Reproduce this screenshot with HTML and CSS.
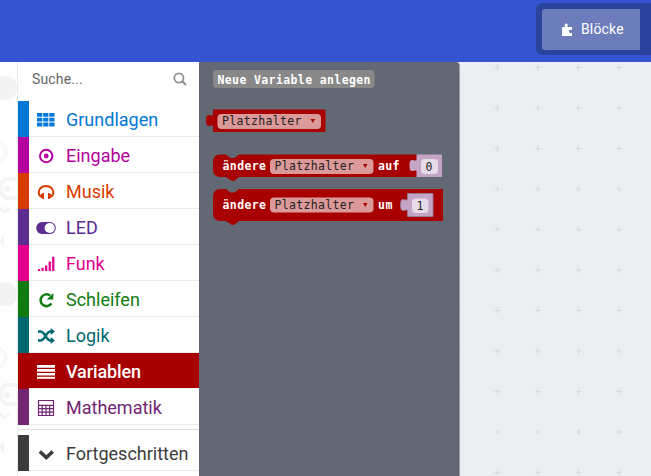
FILE: index.html
```html
<!DOCTYPE html>
<html lang="de">
<head>
<meta charset="utf-8">
<title>Editor</title>
<link rel="stylesheet" href="styles.css">
</head>
<body>
<header class="topbar">
  <div class="switch">
    <div class="switch-item">
      <svg class="puzzle" width="12" height="14" viewBox="0 0 12 14"><path fill="#fff" d="M1 4h3.200C3.200 2.300 3.500.6 5.200.6S7.300 2.300 6.300 4H11v3.200C9.500 6.400 8 7 8 8.500s1.500 2.100 3 1.300V13H1z"/></svg>
      <span>Blöcke</span>
    </div>
  </div>
</header>
<main class="main">
  <svg class="strip" width="17" height="414" viewBox="0 0 17 414">
    <defs>
      <pattern id="doodle" width="17" height="206" patternUnits="userSpaceOnUse">
        <circle cx="5.500" cy="26" r="12" fill="#f3f3f3"/>
        <circle cx="-3" cy="90" r="9" fill="none" stroke="#f3f3f3" stroke-width="4" stroke-dasharray="1.500 1.500"/>
        <path d="M18 117H7q-6 0-6 9t6 10h11" fill="none" stroke="#f5f5f5" stroke-width="4"/>
        <circle cx="7" cy="127" r="3" fill="#f3f3f3"/>
        <path d="M0 145q4 8 9 1" fill="none" stroke="#f4f4f4" stroke-width="3"/>
        <path d="M-1 179l5-6v13z" fill="#f3f3f3"/>
      </pattern>
    </defs>
    <rect width="17" height="414" fill="url(#doodle)"/>
  </svg>
  <nav class="toolbox">
    <div class="search"><span>Suche...</span>
      <svg width="14" height="14" viewBox="0 0 14 14" fill="none" stroke="#929292"><circle cx="5.900" cy="6" r="4.600" stroke-width="1.800"/><path d="M9 9l4 4" stroke-width="2.200"/></svg>
    </div>
    <div class="row basic"><svg class="icon" viewBox="0 0 20 20"><path fill="currentColor" d="M1 4h5.300v3.700H1zM7.200 4h5.200v3.700H7.200zM13.300 4h5.200v3.700h-5.200zM1 8.700h5.300v3.800H1zM7.200 8.700h5.200v3.800H7.200zM13.300 8.700h5.200v3.800h-5.200zM1 13.500h5.300V17.500H1zM7.200 13.500h5.200V17.500H7.200zM13.300 13.500h5.200V17.500h-5.200z"/></svg><span>Grundlagen</span></div>
    <div class="row input"><svg class="icon" viewBox="0 0 20 20"><circle cx="10.200" cy="11" r="6.200" fill="none" stroke="currentColor" stroke-width="2"/><circle cx="10.200" cy="11" r="2.400" fill="currentColor"/></svg><span>Eingabe</span></div>
    <div class="row music"><svg class="icon" viewBox="0 0 20 20"><path d="M4.500 15.500C2.800 14 2.700 12.500 2.700 11.500 2.700 7.500 6 5 10 5s7.300 2.500 7.300 6.500c0 1 0 2.500-1.800 4" fill="none" stroke="currentColor" stroke-width="2"/><path fill="currentColor" d="M5 13l3-1.200V18H6.800L4 16zM15 13l-3-1.200V18h1.200l2.800-2z"/></svg><span>Musik</span></div>
    <div class="row led"><svg class="icon" viewBox="0 0 20 20"><rect x=".2" y="5" width="19.600" height="12" rx="6" fill="currentColor"/><circle cx="13.700" cy="11" r="5.100" fill="#fff"/></svg><span>LED</span></div>
    <div class="row radio"><svg class="icon" viewBox="0 0 20 20"><path fill="currentColor" d="M2 16h2.200v2H2zM5.500 14.800h2.200V18H5.500zM9 12.500h2.300V18H9zM12.600 8.500h2.300V18h-2.300zM16.100 3.800h2.300V18h-2.300z"/></svg><span>Funk</span></div>
    <div class="row loops"><svg class="icon" viewBox="0 0 20 20"><path d="M15.500 14.400A5.900 5.900 0 1 1 14.200 6.600" fill="none" stroke="currentColor" stroke-width="2.500"/><path d="M17.300 4v6.500h-6.500z" fill="currentColor"/></svg><span>Schleifen</span></div>
    <div class="row logic"><svg class="icon" viewBox="0 0 20 20"><path d="M2 6.500h2.500c4.500 0 5.500 9 10 9H16M2 15.500h2.500c4.500 0 5.500-9 10-9H16" fill="none" stroke="currentColor" stroke-width="2.400"/><path d="M14.700 3l4.300 3.500-4.300 3.500zM14.700 12l4.300 3.500-4.300 3.500z" fill="currentColor"/></svg><span>Logik</span></div>
    <div class="row variables"><svg class="icon" viewBox="0 0 20 20"><path fill="currentColor" d="M1 4h18v2.700H1zM1 8h18v2.700H1zM1 12h18v2.300H1z"/><path fill="#dc9999" d="M1 14.300h18v.7H1z"/><path fill="currentColor" d="M1 15.800h18v2H1z"/></svg><span>Variablen</span></div>
    <div class="row math"><svg class="icon" viewBox="0 0 20 20"><path d="M2.500 3.500h15v15h-15zM2.500 8.300h15M2.500 11.700h15M2.500 15.100h15M6.200 8.300v10.200M10 8.300v10.200M13.700 8.300v10.200" fill="none" stroke="currentColor" stroke-width="1.200"/></svg><span>Mathematik</span></div>
    <div class="divider"></div>
    <div class="row advanced"><svg class="icon" viewBox="0 0 20 20"><path d="M3.800 8.500l6.500 6 6.500-6" fill="none" stroke="currentColor" stroke-width="3.500"/></svg><span>Fortgeschritten</span></div>
  </nav>
  <section class="workspace">
    <svg class="grid" width="452" height="414" viewBox="199 62 452 414">
      <defs><pattern id="cross" x="477.250" y="47.250" width="40.500" height="40.500" patternUnits="userSpaceOnUse"><path d="M17.250 20.250h6M20.250 17.250v6" stroke="#d5d9d9" stroke-width="1"/></pattern></defs>
      <rect x="460" y="62" width="191" height="414" fill="url(#cross)"/>
    </svg>
    <div class="flyout">
      <svg class="blocks" width="260" height="414" viewBox="199 62 260 414">
        <rect x="213" y="70" width="161.500" height="18" rx="4" fill="#888"/>
        <text class="bold" x="217.500" y="83.500" textLength="153">Neue Variable anlegen</text>
        <g>
          <path class="red" d="M213 109.500h112.500v22.500H213v-6c-2-2-7 4-7-5.500s5-3.500 7-5.500z"/>
          <rect class="field" x="217.500" y="114" width="103.500" height="15" rx="4"/>
          <text class="name" x="222" y="125" textLength="79.500">Platzhalter</text>
          <path class="red" d="M310.500 119h4.500l-2.250 4z"/>
        </g>
        <g>
          <path class="red" d="M213 162q0-7.500 7.500-7.500H226l4.500 3.500h4l4.500-3.500H417V177H239l-4.500 3.800h-3L226 177h-5.500q-7.500 0-7.500-7.500z"/>
          <text class="bold" x="222.500" y="170" textLength="43.500">ändere</text>
          <rect class="field" x="270" y="159" width="103.500" height="15" rx="4"/>
          <text class="name" x="274.500" y="170" textLength="79.500">Platzhalter</text>
          <path class="red" d="M363 164h4.500l-2.250 4z"/>
          <text class="bold" x="378" y="170" textLength="21.500">auf</text>
          <path class="num" d="M416.500 154.500H442V177h-25.500v-6c-2-2-7 4-7-5.500s5-3.500 7-5.500z"/>
          <rect class="numfield" x="421" y="159" width="17" height="15" rx="4"/>
          <text class="name" x="425.500" y="170.500">0</text>
        </g>
        <g>
          <path class="red" d="M213 196.500q0-7.500 7.500-7.500H226l4.500 3.500h4l4.500-3.500H443v32H239l-4.500 3.800h-3L226 221h-5.500q-7.500 0-7.500-7.500z"/>
          <text class="bold" x="222.500" y="209" textLength="43.500">ändere</text>
          <rect class="field" x="270" y="197.500" width="103.500" height="15" rx="4"/>
          <text class="name" x="274.500" y="209" textLength="79.500">Platzhalter</text>
          <path class="red" d="M363 203h4.500l-2.250 4z"/>
          <text class="bold" x="378" y="209" textLength="14.500">um</text>
          <path class="num edge" d="M407.500 193.500h25.500V216.500h-25.500v-6c-2-2-7 4-7-5.500s5-3.500 7-5.500z"/>
          <rect class="numfield" x="412" y="198.500" width="16.500" height="14.500" rx="4"/>
          <text class="name" x="416.500" y="210">1</text>
        </g>
      </svg>
    </div>
  </section>
</main>
</body>
</html>
```

FILE: styles.css
```css
* { box-sizing: border-box; }
body {
  margin: 0;
  width: 651px;
  height: 476px;
  overflow: hidden;
  background: #fff;
  font-family: Roboto, sans-serif;
}
.topbar {
  height: 62px;
  background: #3454d1;
  display: flex;
  justify-content: flex-end;
  padding-top: 3px;
}
.switch {
  width: 115px;
  height: 52px;
  padding: 6px 11px 5px 6px;
  background: #2a439c;
  border-radius: 6px 0 0 6px;
}
.switch-item {
  height: 41px;
  display: flex;
  align-items: center;
  gap: 8px;
  padding-left: 19px;
  background: #6d7cba;
  border-radius: 3px 0 0 3px;
  color: #fff;
  font-size: 14px;
  letter-spacing: .15px;
}
.switch-item span { padding-bottom: 1px; }
.main { display: flex; height: 414px; }
.strip { flex: none; }
.toolbox {
  flex: none;
  width: 182px;
  border-left: 1px solid #ececec;
  background: #fff;
}
.search {
  height: 39px;
  display: flex;
  align-items: center;
  justify-content: space-between;
  padding: 0 12px 5px 14px;
  color: #666;
  font-size: 14px;
  letter-spacing: .15px;
}
.row {
  height: 36px;
  display: flex;
  align-items: center;
  border-left: 11px solid currentColor;
  box-shadow: inset 0 -1px #ebebeb;
  padding-left: 7px;
  font-size: 18px;
}
.icon { width: 20px; height: 20px; margin-right: 10px; flex: none; }
.row span { white-space: nowrap; }
.basic { color: #0078d7; }
.input { color: #b4009e; }
.music { color: #d83b01; }
.led { color: #5c2d91; }
.radio { color: #e3008c; }
.loops { color: #107c10; }
.logic { color: #006970; }
.variables { color: #fff; background: #a80000; border-left-color: #a80000; }
.variables span { font-weight: 500; letter-spacing: -.1px; }
.math { color: #712672; }
.advanced { color: #3c3c3c; }
.divider { height: 10px; border-bottom: 5px solid #fff; box-shadow: inset 0 -1px #ddd; }
.workspace {
  position: relative;
  width: 452px;
  background: #ebeff0;
}
.grid { display: block; }
.flyout {
  position: absolute;
  left: 0;
  top: 0;
  width: 261px;
  height: 414px;
  background: #636974;
  border-right: 1px solid #989ca3;
  border-top-right-radius: 4px;
}
.blocks { display: block; }
.blocks text { font-family: "DejaVu Sans Mono", monospace; font-size: 12px; }
.blocks .bold { font-weight: 700; font-size: 11.500px; fill: #fff; }
.blocks .name { font-size: 11.500px; fill: #222; }
.red { fill: #a80000; }
.field { fill: #dc9999; }
.num { fill: #c5a5c5; }
.edge { stroke: #9a7590; stroke-width: 1; }
.numfield { fill: #e8dbe8; }
```
